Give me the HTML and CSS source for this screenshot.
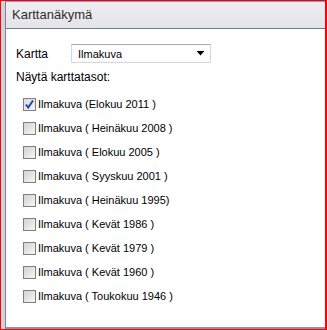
FILE: index.html
```html
<!DOCTYPE html>
<html lang="fi">
<head>
  <meta charset="UTF-8" />
  <title>Karttanäkymä</title>
  <link rel="stylesheet" href="styles.css">
</head>
<body>
  <div class="frame">
    <div class="panel">
      <div class="panel-head">Karttanäkymä</div>
      <div class="panel-body">
        <div class="map-row">
          <span class="map-label">Kartta</span>
          <div class="select">
            <span>Ilmakuva</span>
            <svg class="arrow" width="7" height="5" viewBox="0 0 7 5">
              <path d="M0 0h7v1H0z M0.5 1h6L3.5 4.5z" fill="#000"/>
            </svg>
          </div>
        </div>
        <p class="layers-title">Näytä karttatasot:</p>
        <ul class="layers">
          <li><span class="cb checked"><svg width="11" height="11" viewBox="0 0 11 11"><path d="M2 5.5l2.2 3L9 1.5" fill="none" stroke="#2c45a8" stroke-width="2"/></svg></span>Ilmakuva (Elokuu 2011 )</li>
          <li><span class="cb"></span>Ilmakuva ( Heinäkuu 2008 )</li>
          <li><span class="cb"></span>Ilmakuva ( Elokuu 2005 )</li>
          <li><span class="cb"></span>Ilmakuva ( Syyskuu 2001 )</li>
          <li><span class="cb"></span>Ilmakuva ( Heinäkuu 1995)</li>
          <li><span class="cb"></span>Ilmakuva ( Kevät 1986 )</li>
          <li><span class="cb"></span>Ilmakuva ( Kevät 1979 )</li>
          <li><span class="cb"></span>Ilmakuva ( Kevät 1960 )</li>
          <li><span class="cb"></span>Ilmakuva ( Toukokuu 1946 )</li>
        </ul>
      </div>
    </div>
  </div>
</body>
</html>
```

FILE: styles.css
```css
body {
  margin: 0;
  font-family: "Liberation Sans", Arial, sans-serif;
  color: #000;
  background: #fff;
}

.frame {
  box-sizing: border-box;
  width: 327px;
  height: 330px;
  border: 1px solid #f00;
  border-right-width: 2px;
  padding-left: 4px;
  background: #cfd3dc;
  display: flex;
}

.panel {
  flex: 1;
  background: #fff;
  border-left: 1px solid #7d8597;
  border-top: 1px solid #8a9cc4;
  border-bottom: 2px solid #8b94ad;
  display: flex;
  flex-direction: column;
}

.panel-head {
  height: 26px;
  line-height: 26px;
  padding-left: 6px;
  font-size: 13px;
  color: #2e2e2e;
  background: linear-gradient(#efeff2, #e3e3e8);
  border-bottom: 1px solid #6d7ba2;
}

.panel-body {
  padding: 15px 0 0 10px;
}

.map-row {
  display: flex;
  align-items: center;
}

.map-label {
  width: 55px;
  font-size: 12px;
}

.select {
  box-sizing: border-box;
  width: 140px;
  height: 19px;
  display: flex;
  align-items: center;
  justify-content: space-between;
  padding: 0 6px 0 6px;
  font-size: 11px;
  border: 1px solid #cfd6e6;
  border-top-color: #a4aca8;
}

.arrow {
  display: block;
}

.layers-title {
  margin: 7px 0 8px;
  font-size: 12px;
  line-height: 14px;
}

.layers {
  list-style: none;
  margin: 0;
  padding: 0 0 0 7px;
}

.layers li {
  height: 24px;
  display: flex;
  align-items: center;
  font-size: 11px;
}

.cb {
  box-sizing: border-box;
  width: 13px;
  height: 13px;
  margin-right: 2px;
  border: 1px solid #7f7f7f;
  background: linear-gradient(135deg, #d2d2d2, #f6f6f6);
  display: flex;
  align-items: center;
  justify-content: center;
}

.cb.checked {
  background: linear-gradient(135deg, #d8dae6, #f4f4f8);
}
```
